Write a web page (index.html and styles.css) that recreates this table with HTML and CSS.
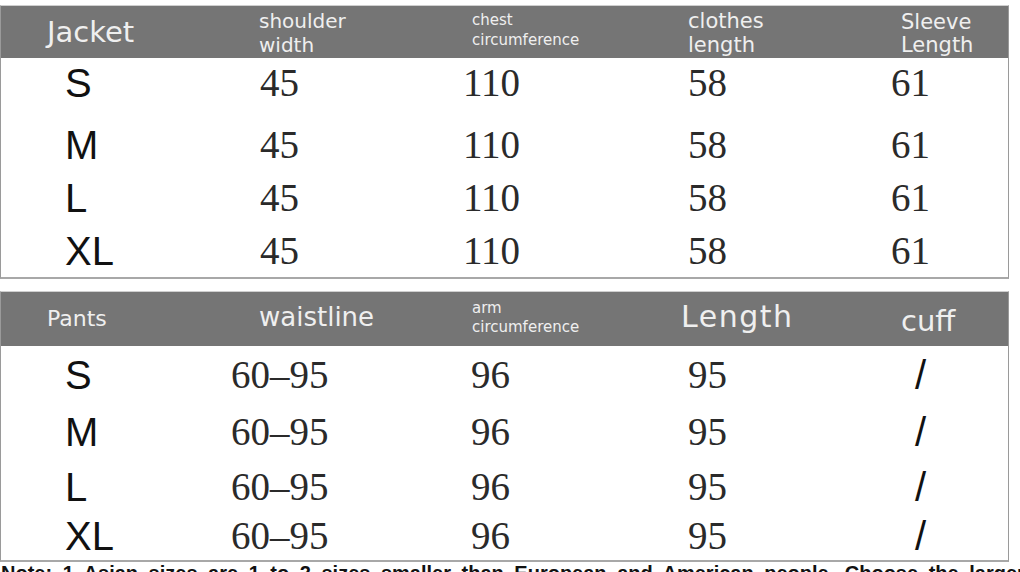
FILE: index.html
```html
<!DOCTYPE html>
<html lang="en">
<head>
<meta charset="utf-8">
<title>Size chart</title>
<link rel="stylesheet" href="styles.css">
</head>
<body>
<div class="page">
  <section class="table jacket">
    <div class="head">
      <div class="h h1">Jacket</div>
      <div class="h h2">shoulder<br>width</div>
      <div class="h h3">chest<br>circumference</div>
      <div class="h h4">clothes<br>length</div>
      <div class="h h5">Sleeve<br>Length</div>
    </div>
    <div class="row r1"><span class="size">S</span><span class="num n2">45</span><span class="num n3">110</span><span class="num n4">58</span><span class="num n5">61</span></div>
    <div class="row r2"><span class="size">M</span><span class="num n2">45</span><span class="num n3">110</span><span class="num n4">58</span><span class="num n5">61</span></div>
    <div class="row r3"><span class="size">L</span><span class="num n2">45</span><span class="num n3">110</span><span class="num n4">58</span><span class="num n5">61</span></div>
    <div class="row r4"><span class="size">XL</span><span class="num n2">45</span><span class="num n3">110</span><span class="num n4">58</span><span class="num n5">61</span></div>
  </section>

  <section class="table pants">
    <div class="head">
      <div class="h p1">Pants</div>
      <div class="h p2">waistline</div>
      <div class="h p3">arm<br>circumference</div>
      <div class="h p4">Length</div>
      <div class="h p5">cuff</div>
    </div>
    <div class="row q1"><span class="size">S</span><span class="num m2">60–95</span><span class="num m3">96</span><span class="num m4">95</span><span class="slash">/</span></div>
    <div class="row q2"><span class="size">M</span><span class="num m2">60–95</span><span class="num m3">96</span><span class="num m4">95</span><span class="slash">/</span></div>
    <div class="row q3"><span class="size">L</span><span class="num m2">60–95</span><span class="num m3">96</span><span class="num m4">95</span><span class="slash">/</span></div>
    <div class="row q4"><span class="size">XL</span><span class="num m2">60–95</span><span class="num m3">96</span><span class="num m4">95</span><span class="slash">/</span></div>
  </section>

  <p class="note">Note: 1 Asian sizes are 1 to 2 sizes smaller than European and American people. Choose the larger size.</p>
</div>
</body>
</html>
```

FILE: styles.css
```css
* { box-sizing: border-box; margin: 0; padding: 0; }

html, body {
  width: 1020px;
  height: 572px;
  overflow: hidden;
  background: #ffffff;
}

.page {
  padding-top: 5px;
  width: 1020px;
  overflow: hidden;
}

.table {
  width: 1009px;
  border-left: 1px solid #9a9a9a;
  border-right: 1px solid #9a9a9a;
  border-top: 1px solid #cfcfcf;
  border-bottom: 2px solid #a8a8a8;
}

.pants {
  margin-top: 12px;
}

.head,
.row {
  display: grid;
  grid-template-columns: 229px 230px 220px 200px 1fr;
}

.head {
  background: #757575;
  color: #efefef;
  font-family: "DejaVu Sans", sans-serif;
  align-items: start;
}

.jacket .head { height: 52px; }
.pants .head { height: 54px; }

/* jacket header cells */
.h1 { font-size: 29px; line-height: 34px; padding: 9px 0 0 46px; }
.h2 { font-size: 20px; line-height: 24px; padding: 3px 0 0 29px; }
.h3 { font-size: 15px; line-height: 20px; padding: 4px 0 0 12px; }
.h4 { font-size: 21px; line-height: 24px; padding: 3px 0 0 8px; }
.h5 { font-size: 21px; line-height: 23px; padding: 5px 0 0 21px; }

/* pants header cells */
.p1 { font-size: 22px; line-height: 26px; padding: 14px 0 0 46px; }
.p2 { font-size: 26px; line-height: 30px; padding: 10px 0 0 29px; }
.p3 { font-size: 15px; line-height: 19px; padding: 7px 0 0 12px; }
.p4 { font-size: 30px; line-height: 34px; padding: 8px 0 0 1px; letter-spacing: 1.5px; }
.p5 { font-size: 29px; line-height: 32px; padding: 13px 0 0 21px; }

.row {
  align-items: center;
  color: #1c1c1c;
}

.size {
  font-family: "Liberation Sans", Arial, sans-serif;
  font-size: 40px;
  line-height: 44px;
  padding-left: 64px;
  color: #111111;
}

.num {
  font-family: "Liberation Serif", "Times New Roman", serif;
  font-size: 39px;
  line-height: 44px;
  color: #2a2a2a;
}

.n2 { padding-left: 30px; }
.n3 { padding-left: 3px; }
.n4 { padding-left: 8px; }
.n5 { padding-left: 11px; }

.m2 { padding-left: 1px; }
.m3 { padding-left: 11px; }
.m4 { padding-left: 8px; }

.slash {
  font-family: "Liberation Sans", Arial, sans-serif;
  font-size: 40px;
  line-height: 44px;
  padding-left: 35px;
  color: #111111;
}

/* jacket row heights */
.r1 { height: 54px; padding-bottom: 5px; }
.r2 { height: 60px; padding-top: 6px; }
.r3 { height: 52px; }
.r4 { height: 53px; }

/* pants row heights */
.q1 { height: 57px; }
.q2 { height: 58px; }
.q3 { height: 51px; }
.q4 { height: 48px; }

.note {
  width: 1020px;
  overflow: hidden;
  font-family: "Liberation Sans", Arial, sans-serif;
  font-size: 20px;
  font-weight: bold;
  line-height: 22px;
  color: #111111;
  white-space: nowrap;
  word-spacing: 5px;
  padding-left: 1px;
}
```
